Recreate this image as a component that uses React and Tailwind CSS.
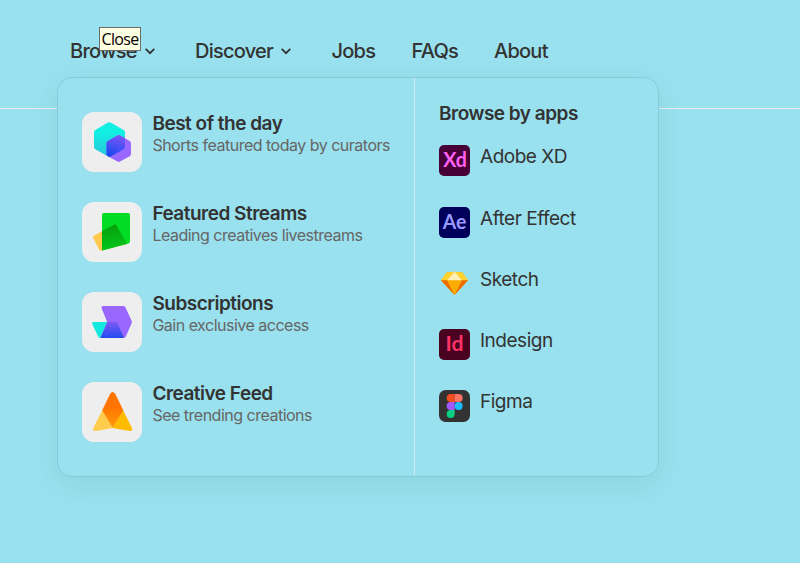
const sans = "font-['Inter','Liberation_Sans',sans-serif]";

function Chevron() {
  return (
    <svg width="10" height="8" viewBox="0 0 10 8" fill="none" stroke="#333" strokeWidth="1.8">
      <path d="M0.7 1.9 L5 6.2 L9.3 1.9" />
    </svg>
  );
}

function BestIcon() {
  return (
    <svg width="60" height="60" viewBox="0 0 60 60">
      <defs>
        <linearGradient id="b1" x1="0" y1="0" x2="0" y2="1">
          <stop offset="0.3" stopColor="#12efe3" />
          <stop offset="1" stopColor="#2bc4dc" />
        </linearGradient>
        <linearGradient id="b2" x1="0.6" y1="0" x2="0.3" y2="1">
          <stop offset="0" stopColor="#7f57f5" />
          <stop offset="0.8" stopColor="#1b4af0" />
        </linearGradient>
        <clipPath id="bc">
          <path d="M26 10.6Q27.3 9.8 28.6 10.6L41.6 18Q43 18.8 43 20.3V35Q43 36.5 41.6 37.3L28.6 44.6Q27.3 45.2 26 44.6L13.3 37.3Q12 36.5 12 35V20.3Q12 18.8 13.3 18Z" />
        </clipPath>
      </defs>
      <path fill="url(#b1)" d="M26 10.6Q27.3 9.8 28.6 10.6L41.6 18Q43 18.8 43 20.3V35Q43 36.5 41.6 37.3L28.6 44.6Q27.3 45.2 26 44.6L13.3 37.3Q12 36.5 12 35V20.3Q12 18.8 13.3 18Z" />
      <path fill="#9966ff" d="M35.5 23.4Q36.7 22.7 38 23.4L47.7 29Q49 29.7 49 31.2V42Q49 43.4 47.7 44.2L38 49.6Q36.7 50.3 35.5 49.6L25.8 44.2Q24.5 43.4 24.5 42V31.2Q24.5 29.7 25.8 29Z" />
      <path clipPath="url(#bc)" fill="url(#b2)" d="M35.5 23.4Q36.7 22.7 38 23.4L47.7 29Q49 29.7 49 31.2V42Q49 43.4 47.7 44.2L38 49.6Q36.7 50.3 35.5 49.6L25.8 44.2Q24.5 43.4 24.5 42V31.2Q24.5 29.7 25.8 29Z" />
    </svg>
  );
}

function StreamsIcon() {
  return (
    <svg width="60" height="60" viewBox="0 0 60 60">
      <defs>
        <linearGradient id="s1" x1="0.5" y1="0" x2="0.6" y2="1">
          <stop offset="0" stopColor="#0a9f0c" />
          <stop offset="1" stopColor="#00c91c" />
        </linearGradient>
      </defs>
      <path fill="#ffc94d" d="M11.2 36Q10.3 34.5 11.8 33.7L33 22.5L45.5 42L19.5 48.6Q18 49 17.1 47.5Z" />
      <path fill="#00dd22" d="M20 12.7Q20 11 21.7 11H46.2Q48 11 48 12.7V39.5Q48 41 46.4 41.5L20 48.6Z" />
      <path fill="url(#s1)" d="M20 29L32.3 22.8Q33.7 22.2 34.5 23.5L45 41.8L20 48.6Z" />
    </svg>
  );
}

function SubsIcon() {
  return (
    <svg width="60" height="60" viewBox="0 0 60 60">
      <defs>
        <linearGradient id="u1" x1="0" y1="0" x2="0" y2="1">
          <stop offset="0" stopColor="#7d58f4" />
          <stop offset="1" stopColor="#214df0" />
        </linearGradient>
      </defs>
      <path fill="#9966ff" d="M19.7 16.4Q18.9 14 21.4 14H41.3Q42.7 14 43.4 15.2L49.6 28.8Q50.1 30 49.6 31.2L44 44.3Q43.3 46 41.5 46H20L25.2 30Z" />
      <path fill="#12eadf" d="M10.2 32Q9.7 30 11.5 30H25.3L18.2 46Q17 46 16.3 44.8Z" />
      <path fill="url(#u1)" d="M25.2 30H33.5Q35 30 35.7 31.4L42 46H18.2Z" />
    </svg>
  );
}

function FeedIcon() {
  return (
    <svg width="60" height="60" viewBox="0 0 60 60">
      <defs>
        <linearGradient id="f1" x1="0" y1="0" x2="0" y2="1">
          <stop offset="0.4" stopColor="#ff7300" />
          <stop offset="1" stopColor="#ff9d0a" />
        </linearGradient>
      </defs>
      <path fill="#ffcc4d" d="M20.4 28L31 46L14 49Q10.2 49.3 11.3 46Z" />
      <path fill="#ffbb00" d="M41 28L50 46Q51 49.3 47.5 49L30.7 46Z" />
      <path fill="url(#f1)" d="M28.2 11.8Q30.7 8 33.2 11.8L41.3 28.3L30.7 46L20.2 28.3Z" />
    </svg>
  );
}

function SketchIcon() {
  return (
    <svg width="31" height="31" viewBox="0 0 31 31">
      <path fill="#fdad00" d="M7.5 4.4L15.5 3.7L23.5 4.4L29 12.2L15.5 27L2 12.2Z" />
      <path fill="#fdd231" d="M7.5 4.4L15.5 3.7L8 12.2H2ZM23.5 4.4L15.5 3.7L23 12.2H29Z" />
      <path fill="#feeeb7" d="M15.5 3.7L23 12.2H8Z" />
      <path fill="#ec6c00" d="M2 12.2H8L15.5 27ZM29 12.2H23L15.5 27Z" />
    </svg>
  );
}

function FigmaIcon() {
  return (
    <svg className="-mb-px" width="31" height="32" viewBox="0 0 31 32">
      <rect width="31" height="32" rx="6.5" fill="#333" />
      <path fill="#f24e1e" d="M15.7 4H11.7a4 4 0 0 0 0 8H15.7Z" />
      <path fill="#ff7262" d="M15.7 4H19.6a4 4 0 0 1 0 8H15.7Z" />
      <path fill="#a259ff" d="M15.7 12H11.7a4 4 0 0 0 0 8H15.7Z" />
      <circle cx="19.6" cy="16" r="4" fill="#1abcfe" />
      <path fill="#0acf83" d="M15.7 20H11.7a4 4 0 1 0 4 4Z" />
    </svg>
  );
}

function AdobeTile({ label, x, width, bg, color }) {
  return (
    <svg width="31" height="31" viewBox="0 0 31 31">
      <rect width="31" height="31" rx="5" fill={bg} />
      <text
        x={x}
        y="22"
        fill={color}
        textLength={width}
        lengthAdjust="spacingAndGlyphs"
        className="font-['Lato','Open_Sans',sans-serif] text-[20px] font-bold"
      >
        {label}
      </text>
    </svg>
  );
}

const features = [
  { title: 'Best of the day', text: 'Shorts featured today by curators', Icon: BestIcon },
  { title: 'Featured Streams', text: 'Leading creatives livestreams', Icon: StreamsIcon },
  { title: 'Subscriptions', text: 'Gain exclusive access', Icon: SubsIcon },
  { title: 'Creative Feed', text: 'See trending creations', Icon: FeedIcon },
];

const apps = [
  { name: 'Adobe XD', icon: <AdobeTile label="Xd" x="4.3" width="23.6" bg="#470137" color="#ff61f6" /> },
  { name: 'After Effect', icon: <AdobeTile label="Ae" x="3.8" width="23.6" bg="#00005b" color="#9999ff" /> },
  { name: 'Sketch', icon: <SketchIcon /> },
  { name: 'Indesign', icon: <AdobeTile label="Id" x="6.6" width="18" bg="#49021f" color="#ff3366" /> },
  { name: 'Figma', icon: <FigmaIcon /> },
];

export default function App() {
  return (
    <div className={`relative h-[563px] w-[800px] overflow-hidden bg-[#99e1ee] text-[#333] ${sans}`}>
      <header className="h-[109px] border-b border-[#eeeeee] pt-[36px] pl-[70px]">
        <nav className="flex h-[30px] items-center text-[20px] leading-[30px] font-medium tracking-[-0.75px] whitespace-nowrap">
          <a className="flex w-[125px] items-center gap-2">Browse <Chevron /></a>
          <a className="flex w-[136.5px] items-center gap-2">Discover <Chevron /></a>
          <a className="w-[80px]">Jobs</a>
          <a className="w-[82.5px]">FAQs</a>
          <a>About</a>
        </nav>
      </header>

      <section className="absolute top-[77px] left-[57px] flex h-[400px] w-[602px] rounded-[15px] border border-[#87cbd9] bg-[#99e1ee] shadow-[0_8px_30px_rgba(0,60,80,0.08)]">
        <div className="flex w-[357px] flex-col gap-[30px] border-r border-[#d3e9ed] pt-[34px] pl-[24px]">
          {features.map(({ title, text, Icon }) => (
            <div key={title} className="flex h-[60px] gap-[10.4px]">
              <div className="h-[60px] w-[60px] shrink-0 rounded-[12px] bg-[#eeeeee]"><Icon /></div>
              <div className="whitespace-nowrap">
                <h3 className="text-[19px] leading-[23px] font-semibold tracking-[-0.5px]">{title}</h3>
                <p className="text-[16px] leading-[21px] tracking-[-0.5px] text-[#666]">{text}</p>
              </div>
            </div>
          ))}
        </div>
        <div className="pt-[22px] pl-[24px] whitespace-nowrap">
          <h3 className="mb-[18.3px] text-[19px] leading-[27px] font-semibold tracking-[-0.5px]">Browse by apps</h3>
          <ul className="flex flex-col gap-[30.25px]">
            {apps.map(({ name, icon }) => (
              <li key={name} className="flex h-[31px] gap-[10px]">
                {icon}
                <span className="text-[19px] leading-[23px] tracking-[-0.48px]">{name}</span>
              </li>
            ))}
          </ul>
        </div>
      </section>

      <div className="absolute top-[27px] left-[99px] flex h-[24px] w-[42px] items-center justify-center border border-[#6b6b6b] bg-[#ffffe1] font-['Open_Sans','Noto_Sans',sans-serif] text-[16px] leading-none tracking-[-0.7px] text-black">
        Close
      </div>
    </div>
  );
}
